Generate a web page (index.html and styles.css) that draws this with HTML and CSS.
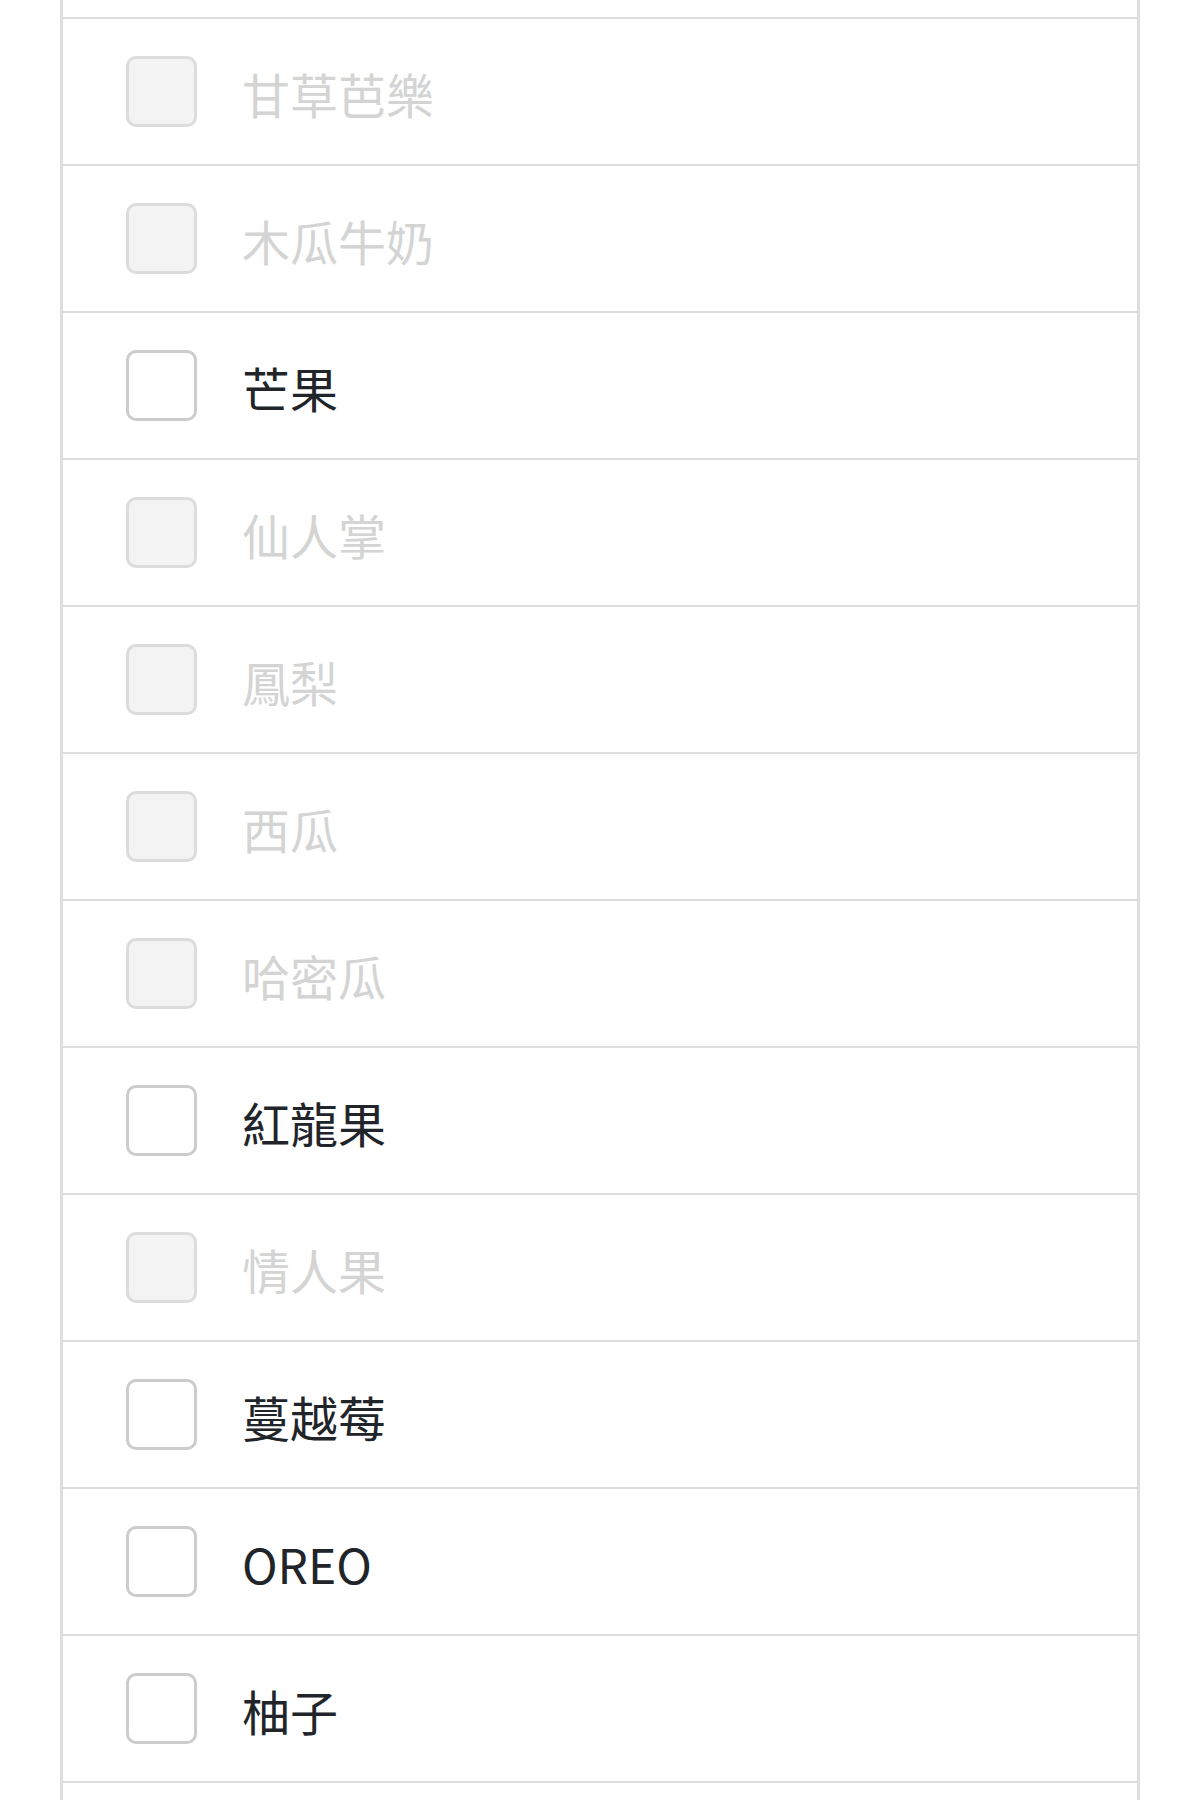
FILE: index.html
```html
<!DOCTYPE html>
<html lang="zh-Hant">
<head>
<meta charset="utf-8">
<title>Fruit list</title>
<link rel="stylesheet" href="styles.css">
</head>
<body>
<ul class="list">
  <li class="row partial"></li>
  <li class="row"><label class="item"><input type="checkbox" class="box" disabled><span class="name">甘草芭樂</span></label></li>
  <li class="row"><label class="item"><input type="checkbox" class="box" disabled><span class="name">木瓜牛奶</span></label></li>
  <li class="row"><label class="item"><input type="checkbox" class="box"><span class="name">芒果</span></label></li>
  <li class="row"><label class="item"><input type="checkbox" class="box" disabled><span class="name">仙人掌</span></label></li>
  <li class="row"><label class="item"><input type="checkbox" class="box" disabled><span class="name">鳳梨</span></label></li>
  <li class="row"><label class="item"><input type="checkbox" class="box" disabled><span class="name">西瓜</span></label></li>
  <li class="row"><label class="item"><input type="checkbox" class="box" disabled><span class="name">哈密瓜</span></label></li>
  <li class="row"><label class="item"><input type="checkbox" class="box"><span class="name">紅龍果</span></label></li>
  <li class="row"><label class="item"><input type="checkbox" class="box" disabled><span class="name">情人果</span></label></li>
  <li class="row"><label class="item"><input type="checkbox" class="box"><span class="name">蔓越莓</span></label></li>
  <li class="row"><label class="item"><input type="checkbox" class="box"><span class="name">OREO</span></label></li>
  <li class="row"><label class="item"><input type="checkbox" class="box"><span class="name">柚子</span></label></li>
  <li class="row last"></li>
</ul>
</body>
</html>
```

FILE: styles.css
```css
html, body {
  margin: 0;
  padding: 0;
  background: #ffffff;
}

body {
  font-family: "Noto Sans CJK TC", "Noto Sans", sans-serif;
  overflow: hidden;
  height: 1800px;
}

.list {
  list-style: none;
  margin: 0 0 0 60px;
  padding: 0;
  width: 1074px;
  border-left: 3px solid #dddddd;
  border-right: 3px solid #dddddd;
  min-height: 1800px;
}

.row {
  height: 145px;
  border-bottom: 2px solid #dddddd;
  box-sizing: content-box;
}

.row.partial {
  height: 17px;
}

.row.last {
  border-bottom: none;
  height: 40px;
}

.item {
  display: flex;
  align-items: center;
  height: 100%;
  padding-left: 63px;
}

.box {
  appearance: none;
  -webkit-appearance: none;
  margin: 0;
  width: 71px;
  height: 71px;
  box-sizing: border-box;
  border: 3px solid #cccccc;
  border-radius: 10px;
  background: #ffffff;
  flex: none;
}

.box:disabled {
  background: #f3f3f3;
  border-color: #dcdcdc;
}

.name {
  margin-left: 45px;
  font-size: 48px;
  line-height: 1;
  color: #212529;
  padding-top: 2px;
}

.box:disabled + .name {
  color: #d4d4d4;
}
```
